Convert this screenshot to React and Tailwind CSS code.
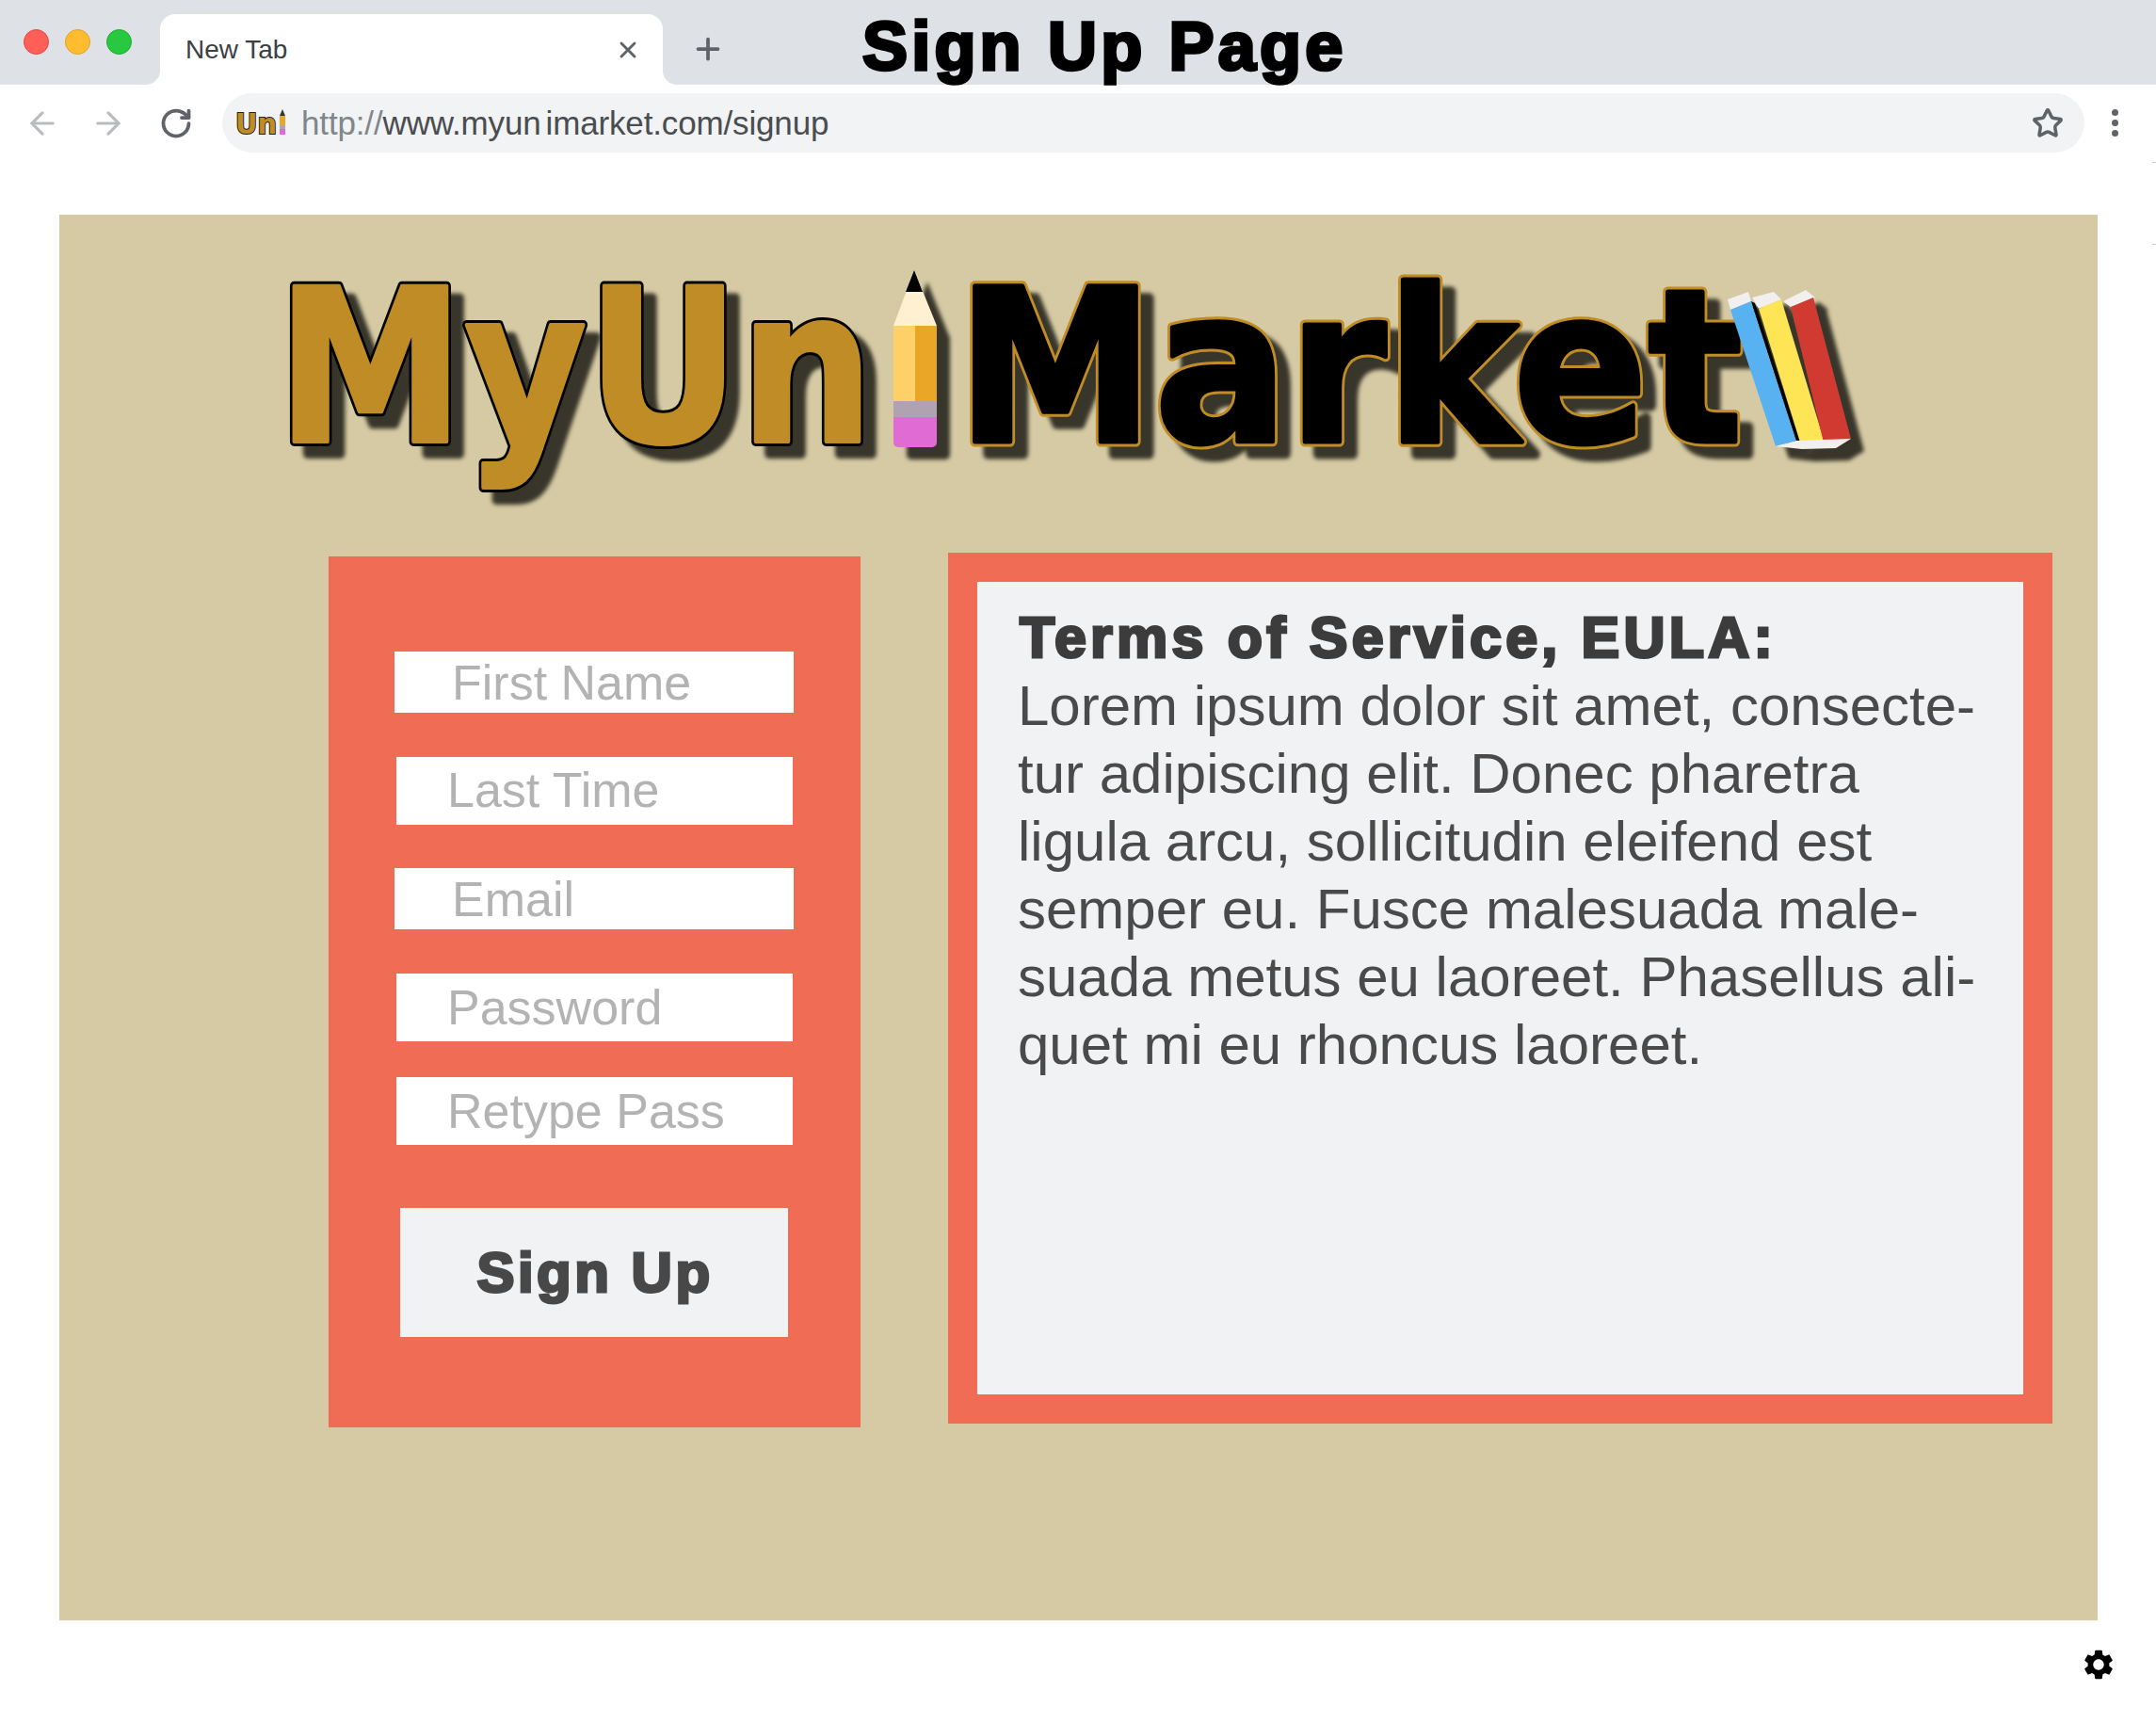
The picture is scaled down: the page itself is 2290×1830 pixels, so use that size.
import React from "react";
import { ArrowLeft, ArrowRight, RotateCw, Star, Plus, X } from "lucide-react";
import { MdSettings } from "react-icons/md";

const FIELD_TEXT = "font-['Liberation_Sans',Arial,sans-serif] text-[52px] leading-none text-[#b3b3b3]";

function Field({ label, wide, inset }) {
  return (
    <div className={`flex items-center bg-white ${wide ? "ml-[70px] w-[424px] h-[65px]" : "ml-[72px] w-[421px] h-[72px]"} ${FIELD_TEXT}`}>
      <span className={inset}>{label}</span>
    </div>
  );
}

function Logo() {
  return (
    <svg viewBox="290 270 1700 270" className="block h-[270px] w-[1700px] overflow-visible" aria-label="MyUniMarket logo">
      <defs>
        <text id="logo-myun" x="294" y="469" textLength="634" lengthAdjust="spacingAndGlyphs" fontFamily="DejaVu Sans" fontWeight="700" fontSize="226" strokeLinejoin="round">MyUn</text>
        <text id="logo-market" x="1016" y="469" textLength="835" lengthAdjust="spacingAndGlyphs" fontFamily="DejaVu Sans" fontWeight="700" fontSize="226" strokeLinejoin="round">Market</text>
      </defs>
      <g className="[filter:drop-shadow(14px_13px_2px_#38352a)]">
        <use href="#logo-myun" fill="#000" stroke="#000" strokeWidth="10" />
        <use href="#logo-myun" fill="#c08c25" stroke="#c08c25" strokeWidth="4" />
        <g>
          <polygon points="971,287 949,346 995,346" fill="#fef0d0" />
          <polygon points="971,287 962,310 980,310" fill="#000" />
          <rect x="949" y="346" width="23" height="80" fill="#fdd068" />
          <rect x="972" y="346" width="23" height="80" fill="#e9a728" />
          <rect x="949" y="426" width="46" height="17" fill="#b0a2b0" />
          <path d="M949 443h46v27a5 5 0 0 1-5 5h-36a5 5 0 0 1-5-5z" fill="#e06bd5" />
        </g>
        <use href="#logo-market" fill="#c08c25" stroke="#c08c25" strokeWidth="11" />
        <use href="#logo-market" fill="#000" stroke="#000" strokeWidth="5" />
        <g>
          <polygon points="1835,318 1857,310 1860,320 1838,329" fill="#f1f0ee" />
          <polygon points="1838,329 1860,320 1908,468 1886,474" fill="#58b2f2" />
          <polygon points="1860,320 1864,322 1912,470 1908,468" fill="#000" />
          <polygon points="1861,316 1884,310 1892,318 1868,328" fill="#f1f0ee" />
          <polygon points="1868,328 1892,318 1938,470 1914,476" fill="#fde556" />
          <polygon points="1894,320 1918,308 1928,316 1902,326" fill="#f1f0ee" />
          <polygon points="1902,326 1926,316 1966,466 1938,474" fill="#d03a30" />
          <polygon points="1886,474 1908,468 1966,466 1950,476 1914,477" fill="#f1f0ee" />
        </g>
      </g>
    </svg>
  );
}

export default function App() {
  return (
    <div className="relative h-[1830px] w-[2290px] overflow-hidden bg-white font-['Liberation_Sans',Arial,sans-serif]">
      {/* Tab strip */}
      <div className="flex h-[90px] items-center bg-[#dee1e6]">
        <div className="ml-[25px] flex w-[115px] gap-[17px] self-start pt-[31px]">
          <span className="h-[27px] w-[27px] rounded-full border border-[#e0443e] bg-[#ff5f57]" />
          <span className="h-[27px] w-[27px] rounded-full border border-[#dea123] bg-[#febc2e]" />
          <span className="h-[27px] w-[27px] rounded-full border border-[#1aab29] bg-[#28c840]" />
        </div>
        <div className="relative ml-[30px] flex h-[75px] w-[534px] items-center justify-between self-end rounded-t-[16px] bg-white pl-[27px] pr-[23px]">
          <div className="absolute bottom-0 left-[-15px] h-[15px] w-[15px] bg-white"><div className="h-full w-full rounded-br-[15px] bg-[#dee1e6]" /></div>
          <div className="absolute bottom-0 right-[-15px] h-[15px] w-[15px] bg-white"><div className="h-full w-full rounded-bl-[15px] bg-[#dee1e6]" /></div>
          <span className="text-[28px] leading-none text-[#3c4043]">New Tab</span>
          <X size={28} strokeWidth={2.5} className="text-[#5f6368]" />
        </div>
        <Plus size={36} strokeWidth={2.5} className="ml-[30px] mt-[14px] text-[#5f6368]" />
        <div className="ml-[146px] mt-[8px] text-[72px] font-bold leading-none tracking-[4.2px] text-black [-webkit-text-stroke:3.5px_#000]">Sign Up Page</div>
      </div>

      {/* Toolbar */}
      <div className="flex h-[81px] items-center">
        <ArrowLeft size={38} strokeWidth={2} className="ml-[26px] text-[#b9bbbe]" />
        <ArrowRight size={38} strokeWidth={2} className="ml-[32px] text-[#b9bbbe]" />
        <RotateCw size={36} strokeWidth={2.5} className="ml-[35px] text-[#5f6368]" />
        <div className="ml-[31px] flex h-[63px] w-[1978px] items-center rounded-full bg-[#f1f3f4] pl-[14px] pr-[22px]">
          <svg viewBox="0 0 56 32" className="h-[32px] w-[56px] shrink-0 overflow-visible" aria-label="Uni logo">
            <text x="0" y="27" textLength="44" lengthAdjust="spacingAndGlyphs" fontFamily="DejaVu Sans" fontWeight="700" fontSize="30" fill="#c08c25" stroke="#222" strokeWidth="2" paintOrder="stroke">Un</text>
            <rect x="47" y="8" width="6" height="10" fill="#e9a728" />
            <rect x="47" y="18" width="6" height="4" fill="#b0a2b0" />
            <rect x="47" y="22" width="6" height="6" fill="#e06bd5" />
            <polygon points="50,1 47,8 53,8" fill="#333" />
          </svg>
          <div className="ml-[14px] -mt-[1px] whitespace-nowrap text-[35px] leading-none tracking-[-0.15px] text-[#4a4d50]">
            <span className="text-[#80868b]">http://</span>www.myun<span className="ml-[5px]">imarket.com/signup</span>
          </div>
          <Star size={34} strokeWidth={2.5} className="ml-auto text-[#5f6368]" />
        </div>
        <div className="ml-[29px] flex flex-col gap-[4px]">
          <span className="h-[7px] w-[7px] rounded-full bg-[#5f6368]" />
          <span className="h-[7px] w-[7px] rounded-full bg-[#5f6368]" />
          <span className="h-[7px] w-[7px] rounded-full bg-[#5f6368]" />
        </div>
      </div>

      {/* Page panel */}
      <div className="ml-[63px] mt-[57px] h-[1493px] w-[2165px] bg-[#d5caa3]">
        <div className="ml-[227px] pt-[42px]"><Logo /></div>
        <div className="ml-[286px] mt-[47px] flex items-start">
          <div className="mt-[4px] flex h-[925px] w-[565px] flex-col bg-[#f16c54]">
            <div className="pt-[101px]" />
            <Field wide label="First Name" inset="ml-[61px]" />
            <div className="h-[47px]" />
            <Field label="Last Time" inset="ml-[54px] -mt-[2px]" />
            <div className="h-[46px]" />
            <Field wide label="Email" inset="ml-[61px]" />
            <div className="h-[47px]" />
            <Field label="Password" inset="ml-[54px] -mt-[1px]" />
            <div className="h-[38px]" />
            <Field label="Retype Pass" inset="ml-[54px] -mt-[1px]" />
            <div className="ml-[76px] mt-[67px] flex h-[137px] w-[412px] items-center justify-center bg-[#f1f2f4] pl-[2px] text-[60px] font-bold leading-none tracking-[3.5px] text-[#484848] [-webkit-text-stroke:3px_#484848]">
              Sign Up
            </div>
          </div>
          <div className="ml-[93px] h-[925px] w-[1173px] border-[31px] border-[#f16c54] bg-[#f1f2f4] pl-[43px] pt-[23px]">
            <div className="ml-[2px] whitespace-nowrap text-[61px] font-bold leading-[72px] tracking-[4.2px] text-[#3c3c3c] [-webkit-text-stroke:3px_#3c3c3c]">Terms of Service, EULA:</div>
            <div className="mt-[1px] whitespace-nowrap text-[60px] leading-[72px] text-[#4a4a4a]">
              <div>Lorem ipsum dolor sit amet, consecte-</div>
              <div>tur adipiscing elit. Donec pharetra</div>
              <div>ligula arcu, sollicitudin eleifend est</div>
              <div>semper eu. Fusce malesuada male-</div>
              <div>suada metus eu laoreet. Phasellus ali-</div>
              <div>quet mi eu rhoncus laoreet.</div>
            </div>
          </div>
        </div>
      </div>

      <div className="flex justify-end pr-[42px] pt-[28px]">
        <MdSettings size={38} className="text-black" />
      </div>

      <span className="absolute right-0 top-[172px] h-[1px] w-[4px] bg-[#cccccc]" />
      <span className="absolute right-0 top-[259px] h-[1px] w-[4px] bg-[#cccccc]" />
    </div>
  );
}
